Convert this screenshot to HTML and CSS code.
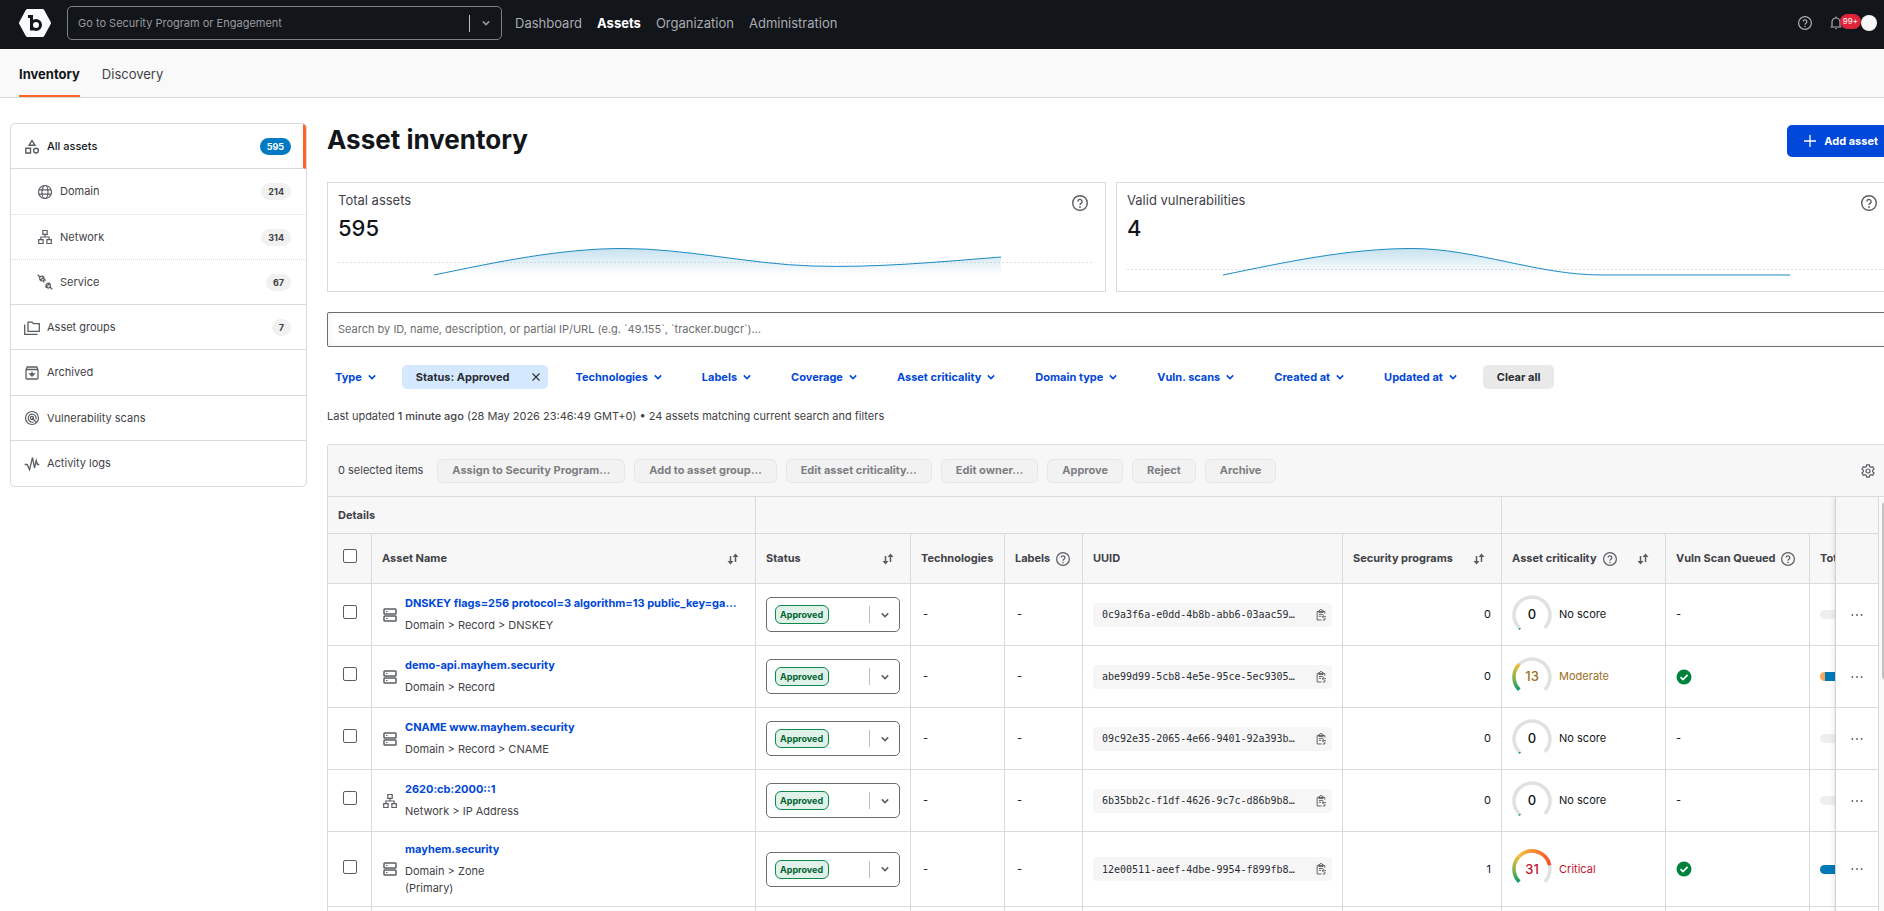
FILE: index.html
```
<!DOCTYPE html>
<html lang="en">
<head>
    <meta charset="UTF-8">
    <meta name="viewport" content="width=device-width, initial-scale=1.0">
    <title>Asset inventory</title>
    <link rel="stylesheet" href="styles.css">
</head>
<body>
    <!-- Shared icons -->
    <svg class="sprite" aria-hidden="true">
        <symbol id="chevron" viewBox="0 0 12 12"><path d="M2.800 4.400 6 7.600l3.200-3.200" fill="none" stroke="currentColor" stroke-width="1.500"/></symbol>
        <symbol id="help" viewBox="0 0 16 16"><circle cx="8" cy="8" r="7.300" fill="none" stroke="currentColor" stroke-width="1.400"/><path d="M5.900 6.400a2.100 2.100 0 1 1 3.400 1.700C8.400 8.700 8 9.100 8 10.100" fill="none" stroke="currentColor" stroke-width="1.400"/><circle cx="8" cy="12" r=".9" fill="currentColor"/></symbol>
        <symbol id="sort" viewBox="0 0 14 14"><path d="M4.500 4v6M9.500 10V4" stroke="currentColor" stroke-width="1.500"/><path d="M1.500 9h6l-3 3.500zM6.500 5h6l-3-3.500z" fill="currentColor"/></symbol>
        <symbol id="network" viewBox="0 0 16 16"><path d="M5.800 1.500h4.400v3.800H5.800zM1.700 10.700h4.400v3.800H1.700zM9.900 10.700h4.400v3.800H9.900zM8 5.300V8M3.900 10.700V8h8.200v2.700" fill="none" stroke="currentColor" stroke-width="1.200"/></symbol>
        <symbol id="record" viewBox="0 0 16 16"><rect x="2" y="2" width="12" height="5" rx=".8" fill="none" stroke="currentColor" stroke-width="1.500"/><rect x="2" y="9" width="12" height="5" rx=".8" fill="none" stroke="currentColor" stroke-width="1.500"/><path d="M4 4.500h1.500M4 11.500h1.500" stroke="currentColor" stroke-width="1.200"/></symbol>
        <symbol id="copy" viewBox="0 0 14 14"><path d="M11.500 5.500V3h-9v9.800h5M4.500 3V1.800h1.200a1.300 1.300 0 0 1 2.600 0h1.200V4h-5zM4.500 6.300h5M4.500 8.500H7M11.500 12.800H9M12.800 9H8.500M10.200 7.200 8.400 9l1.800 1.800M11.500 10.500v2.300" fill="none" stroke="currentColor" stroke-width="1.100"/></symbol>
        <symbol id="check" viewBox="0 0 16 16"><circle cx="8" cy="8" r="7.500" fill="#00823c"/><path d="m4.500 8.200 2.500 2.400 4.600-4.700" fill="none" stroke="#fff" stroke-width="1.600"/></symbol>
        <symbol id="dots" viewBox="0 0 12 12"><circle cx="1.400" cy="6" r=".9"/><circle cx="6" cy="6" r=".9"/><circle cx="10.600" cy="6" r=".9"/></symbol>
        <symbol id="gauge-0" viewBox="0 0 40 40"><path d="M7.270 32.730A18 18 0 1 1 32.730 32.730" class="gauge-track"/><path d="M8.500 33.200 6.800 34.300" stroke="#0a9b6a" stroke-width="1.500"/></symbol>
        <symbol id="gauge-13" viewBox="0 0 40 40"><path d="M7.270 32.730A18 18 0 1 1 32.730 32.730" class="gauge-track"/><path d="M7.270 32.730A18 18 0 0 1 7.270 7.270" fill="none" stroke="url(#green-yellow)" stroke-width="3.500"/></symbol>
        <symbol id="gauge-31" viewBox="0 0 40 40"><path d="M7.270 32.730A18 18 0 1 1 32.730 32.730" class="gauge-track"/><path d="M7.270 32.730A18 18 0 0 1 7.270 7.270" fill="none" stroke="url(#green-yellow)" stroke-width="3.500"/><path d="M7.270 7.270A18 18 0 0 1 37.600 16.260" fill="none" stroke="url(#yellow-red)" stroke-width="3.500"/></symbol>
        <defs>
            <linearGradient id="green-yellow" gradientUnits="userSpaceOnUse" x1="0" y1="33" x2="0" y2="7"><stop offset="0" stop-color="#0a9b6a"/><stop offset=".4" stop-color="#7ab04c"/><stop offset="1" stop-color="#f7bf35"/></linearGradient>
            <linearGradient id="yellow-red" gradientUnits="userSpaceOnUse" x1="7" y1="0" x2="38" y2="0"><stop offset="0" stop-color="#f7bf35"/><stop offset="1" stop-color="#fb4f2a"/></linearGradient>
            <linearGradient id="area" x1="0" y1="0" x2="0" y2="1"><stop offset="0" stop-color="#007ab8" stop-opacity=".22"/><stop offset="1" stop-color="#007ab8" stop-opacity="0"/></linearGradient>
        </defs>
    </svg>

    <header class="topbar">
        <a href="#" class="logo" aria-label="Home">
            <svg width="32" height="28" viewBox="0 0 32 28"><path d="M8.500 0h15a2 2 0 0 1 1.700 1l6.500 12a2 2 0 0 1 0 2l-6.500 12a2 2 0 0 1-1.700 1h-15a2 2 0 0 1-1.700-1L.3 15a2 2 0 0 1 0-2L6.800 1a2 2 0 0 1 1.700-1z" fill="#f7faff"/><path d="M9 7.500h3.500v14" fill="none" stroke="#12151a" stroke-width="3"/><circle cx="17" cy="16" r="4.500" fill="none" stroke="#12151a" stroke-width="3"/></svg>
        </a>
        <div class="program-picker">
            <select aria-label="Program"><option>Go to Security Program or Engagement</option></select>
            <span class="divider"></span>
            <svg class="icon-12"><use href="#chevron"/></svg>
        </div>
        <nav class="main-nav">
            <a href="#">Dashboard</a>
            <a href="#" class="active">Assets</a>
            <a href="#">Organization</a>
            <a href="#">Administration</a>
        </nav>
        <div class="account">
            <button class="icon-button" aria-label="Help"><svg class="icon-14"><use href="#help"/></svg></button>
            <button class="icon-button bell" aria-label="Notifications">
                <svg width="12" height="14" viewBox="0 0 12 14"><path d="M.5 11h11M2 11V6a4 4 0 0 1 8 0v5M6 2V.4" fill="none" stroke="currentColor" stroke-width="1.200"/><path d="M4.700 12.200h2.600L6 13.600z" fill="currentColor"/></svg>
                <span class="bell-count">99+</span>
            </button>
            <button class="avatar" aria-label="Account"></button>
        </div>
    </header>

    <nav class="subnav">
        <a href="#" class="active">Inventory</a>
        <a href="#">Discovery</a>
    </nav>

    <div class="page">
        <aside class="sidebar">
            <a href="#" class="item current">
                <svg class="icon-16" viewBox="0 0 16 16"><path d="M8 1.500 11 6.300H5zM1.800 9.300h4.700v4.700H1.800z" fill="none" stroke="currentColor" stroke-width="1.400"/><circle cx="12" cy="11.600" r="2.400" fill="none" stroke="currentColor" stroke-width="1.400"/></svg>
                <span>All assets</span><span class="count">595</span>
            </a>
            <a href="#" class="item sub">
                <svg class="icon-16" viewBox="0 0 16 16"><g fill="none" stroke="currentColor" stroke-width="1.200"><circle cx="8" cy="8" r="6.500"/><ellipse cx="8" cy="8" rx="3" ry="6.500"/><path d="M1.900 5.800h12.200M1.900 10.200h12.200"/></g></svg>
                <span>Domain</span><span class="count">214</span>
            </a>
            <a href="#" class="item sub">
                <svg class="icon-16"><use href="#network"/></svg>
                <span>Network</span><span class="count">314</span>
            </a>
            <a href="#" class="item sub last">
                <svg class="icon-16" viewBox="0 0 16 16"><g fill="none" stroke="currentColor" stroke-width="1.300"><path d="M.7.7l2.500 2.500M2.900 6.800 7.100 2.600M3.400 6.100c-1.400-1.400-.8-3.300.4-3.700 1-.5 2-.3 2.600.7M3.700 6.600l2.500.3.9-.9-.3-2.700M5.800 6.800l1.600 1.600M6.900 4.800l1.800 1.600M12.800 12.800l2.500 2.500M8.600 13.600l4.500-4.500M12.500 9.700c1.400 1.400 1.100 3-.2 3.900-1 .6-2 .4-2.800-.7M8.800 13l.5-2.500 1.200-1.200 2.500-.2"/></g></svg>
                <span>Service</span><span class="count">67</span>
            </a>
            <a href="#" class="item">
                <svg class="icon-16" viewBox="0 0 16 16"><path d="M4 2.200h4L9.500 3.700h5.800v7.600H4zM.7 4.500v9.800h12.800" fill="none" stroke="currentColor" stroke-width="1.300"/></svg>
                <span>Asset groups</span><span class="count">7</span>
            </a>
            <a href="#" class="item">
                <svg class="icon-16" viewBox="0 0 16 16"><path d="M2 4.800V13a1 1 0 0 0 1 1h10a1 1 0 0 0 1-1V4.800L12.800 2H3.200zM2 4.500h12M8 6.500v4M5.800 8.800 8 11l2.200-2.200z" fill="none" stroke="currentColor" stroke-width="1.300"/></svg>
                <span>Archived</span>
            </a>
            <a href="#" class="item">
                <svg class="icon-16" viewBox="0 0 16 16"><g fill="none" stroke="currentColor" stroke-width="1.200"><circle cx="8" cy="8" r="6.500"/><path d="M12 9.500A4 4 0 1 0 9.500 12"/><circle cx="8" cy="8" r="1.600"/><path d="m8 8 4.500 4.500"/></g></svg>
                <span>Vulnerability scans</span>
            </a>
            <a href="#" class="item">
                <svg class="icon-16" viewBox="0 0 16 16"><path d="M.7 8.500h2.500l2.300 5.300L8.500 1.500 10.500 12l1.700-7.500 1.300 4h1.800" fill="none" stroke="currentColor" stroke-width="1.300"/></svg>
                <span>Activity logs</span>
            </a>
        </aside>

        <main class="content">
            <div class="title-row">
                <h1>Asset inventory</h1>
                <button class="primary">
                    <svg class="icon-12" viewBox="0 0 12 12"><path d="M6 0v12M0 6h12" stroke="currentColor" stroke-width="1.300"/></svg>
                    Add asset
                </button>
            </div>

            <section class="stats">
                <div class="stat">
                    <div class="stat-head">
                        <div>
                            <h2>Total assets</h2>
                            <p class="stat-value">595</p>
                        </div>
                        <svg class="icon-16"><use href="#help"/></svg>
                    </div>
                    <svg class="chart" viewBox="0 4 757 32" preserveAspectRatio="none">
                        <path class="mid" d="M0 18.500H757"/>
                        <path fill="url(#area)" d="M96 31C159 18 222 4.500 285 4.500 348 4.500 411 20 474 22S600 18 663 13V31z"/>
                        <path class="line" d="M96 31C159 18 222 4.500 285 4.500 348 4.500 411 20 474 22S600 18 663 13"/>
                    </svg>
                </div>
                <div class="stat">
                    <div class="stat-head">
                        <div>
                            <h2>Valid vulnerabilities</h2>
                            <p class="stat-value">4</p>
                        </div>
                        <svg class="icon-16"><use href="#help"/></svg>
                    </div>
                    <svg class="chart" viewBox="0 4 757 32" preserveAspectRatio="none">
                        <path class="mid" d="M0 25.500H757"/>
                        <path fill="url(#area)" d="M96 31C159 18 222 4.500 285 4.500S411 31 474 31z"/>
                        <path class="line" d="M96 31C159 18 222 4.500 285 4.500S411 31 474 31H663"/>
                    </svg>
                </div>
            </section>

            <input class="search" type="text" aria-label="Search assets" placeholder="Search by ID, name, description, or partial IP/URL (e.g. `49.155`, `tracker.bugcr`)…">

            <div class="filters">
                <button class="filter">Type <svg class="icon-12"><use href="#chevron"/></svg></button>
                <button class="chip">Status: Approved <svg class="icon-12" viewBox="0 0 12 12"><path d="m2.500 2.500 7 7M9.500 2.500l-7 7" stroke="currentColor" stroke-width="1.100"/></svg></button>
                <button class="filter">Technologies <svg class="icon-12"><use href="#chevron"/></svg></button>
                <button class="filter">Labels <svg class="icon-12"><use href="#chevron"/></svg></button>
                <button class="filter">Coverage <svg class="icon-12"><use href="#chevron"/></svg></button>
                <button class="filter">Asset criticality <svg class="icon-12"><use href="#chevron"/></svg></button>
                <button class="filter">Domain type <svg class="icon-12"><use href="#chevron"/></svg></button>
                <button class="filter">Vuln. scans <svg class="icon-12"><use href="#chevron"/></svg></button>
                <button class="filter">Created at <svg class="icon-12"><use href="#chevron"/></svg></button>
                <button class="filter">Updated at <svg class="icon-12"><use href="#chevron"/></svg></button>
                <button class="clear">Clear all</button>
            </div>

            <p class="updated">Last updated <span>1 minute ago</span> (28 May 2026 23:46:49 GMT+0) • 24 assets matching current search and filters</p>

            <section class="panel">
                <div class="toolbar">
                    <span class="selected">0 selected items</span>
                    <button disabled>Assign to Security Program…</button>
                    <button disabled>Add to asset group…</button>
                    <button disabled>Edit asset criticality…</button>
                    <button disabled>Edit owner…</button>
                    <button disabled>Approve</button>
                    <button disabled>Reject</button>
                    <button disabled>Archive</button>
                    <button class="icon-button settings" aria-label="Table settings">
                        <svg class="icon-14" viewBox="0 0 14 14"><path d="M5.700.8h2.600l.4 1.700 1.300.8 1.700-.6 1.300 2.300-1.300 1.200v1.600l1.300 1.200-1.300 2.300-1.700-.6-1.300.8-.4 1.700H5.700l-.4-1.700-1.300-.8-1.700.6L1 9l1.300-1.200V6.200L1 5l1.300-2.300 1.700.6 1.300-.8z" fill="none" stroke="currentColor" stroke-width="1.200"/><circle cx="7" cy="7" r="2" fill="none" stroke="currentColor" stroke-width="1.200"/></svg>
                    </button>
                </div>
                <div class="table-area">
                    <div class="table-scroll">
                        <table>
                            <colgroup>
                                <col class="w-check"><col class="w-name"><col class="w-status"><col class="w-tech"><col class="w-labels"><col class="w-uuid"><col class="w-programs"><col class="w-criticality"><col class="w-scan"><col class="w-total"><col class="w-actions">
                            </colgroup>
                            <thead>
                                <tr class="groups">
                                    <th colspan="2">Details</th>
                                    <th colspan="5"></th>
                                    <th colspan="3"></th>
                                    <th class="actions"></th>
                                </tr>
                                <tr class="columns">
                                    <th class="check"><input type="checkbox" aria-label="Select all"></th>
                                    <th><div class="head">Asset Name <svg class="icon-14 sort"><use href="#sort"/></svg></div></th>
                                    <th><div class="head">Status <svg class="icon-14 sort"><use href="#sort"/></svg></div></th>
                                    <th>Technologies</th>
                                    <th><div class="head">Labels <svg class="icon-14"><use href="#help"/></svg></div></th>
                                    <th>UUID</th>
                                    <th><div class="head">Security programs <svg class="icon-14 sort"><use href="#sort"/></svg></div></th>
                                    <th><div class="head">Asset criticality <svg class="icon-14"><use href="#help"/></svg> <svg class="icon-14 sort"><use href="#sort"/></svg></div></th>
                                    <th><div class="head">Vuln Scan Queued <svg class="icon-14"><use href="#help"/></svg></div></th>
                                    <th>Total</th>
                                    <th class="actions"></th>
                                </tr>
                            </thead>
                            <tbody>
                                <tr>
                                    <td class="check"><input type="checkbox" aria-label="Select DNSKEY"></td>
                                    <td><div class="asset"><svg class="icon-16"><use href="#record"/></svg><div><a href="#">DNSKEY flags=256 protocol=3 algorithm=13 public_key=ga…</a><p>Domain &gt; Record &gt; DNSKEY</p></div></div></td>
                                    <td><div class="status"><select aria-label="Status"><option>Approved</option></select><span class="divider"></span><svg class="icon-12"><use href="#chevron"/></svg></div></td>
                                    <td class="dash">-</td>
                                    <td class="dash">-</td>
                                    <td><div class="uuid"><code>0c9a3f6a-e0dd-4b8b-abb6-03aac59…</code><button class="icon-button" aria-label="Copy"><svg class="icon-12"><use href="#copy"/></svg></button></div></td>
                                    <td class="number">0</td>
                                    <td><div class="score"><div class="gauge"><svg><use href="#gauge-0"/></svg><b>0</b></div>No score</div></td>
                                    <td>-</td>
                                    <td><div class="bar"></div></td>
                                    <td class="actions"><button class="icon-button" aria-label="More"><svg class="icon-12"><use href="#dots"/></svg></button></td>
                                </tr>
                                <tr>
                                    <td class="check"><input type="checkbox" aria-label="Select demo-api.mayhem.security"></td>
                                    <td><div class="asset"><svg class="icon-16"><use href="#record"/></svg><div><a href="#">demo-api.mayhem.security</a><p>Domain &gt; Record</p></div></div></td>
                                    <td><div class="status"><select aria-label="Status"><option>Approved</option></select><span class="divider"></span><svg class="icon-12"><use href="#chevron"/></svg></div></td>
                                    <td class="dash">-</td>
                                    <td class="dash">-</td>
                                    <td><div class="uuid"><code>abe99d99-5cb8-4e5e-95ce-5ec9305…</code><button class="icon-button" aria-label="Copy"><svg class="icon-12"><use href="#copy"/></svg></button></div></td>
                                    <td class="number">0</td>
                                    <td><div class="score moderate"><div class="gauge"><svg><use href="#gauge-13"/></svg><b>13</b></div>Moderate</div></td>
                                    <td><svg class="icon-16"><use href="#check"/></svg></td>
                                    <td><div class="bar mixed"></div></td>
                                    <td class="actions"><button class="icon-button" aria-label="More"><svg class="icon-12"><use href="#dots"/></svg></button></td>
                                </tr>
                                <tr>
                                    <td class="check"><input type="checkbox" aria-label="Select www.mayhem.security"></td>
                                    <td><div class="asset"><svg class="icon-16"><use href="#record"/></svg><div><a href="#">CNAME www.mayhem.security</a><p>Domain &gt; Record &gt; CNAME</p></div></div></td>
                                    <td><div class="status"><select aria-label="Status"><option>Approved</option></select><span class="divider"></span><svg class="icon-12"><use href="#chevron"/></svg></div></td>
                                    <td class="dash">-</td>
                                    <td class="dash">-</td>
                                    <td><div class="uuid"><code>09c92e35-2065-4e66-9401-92a393b…</code><button class="icon-button" aria-label="Copy"><svg class="icon-12"><use href="#copy"/></svg></button></div></td>
                                    <td class="number">0</td>
                                    <td><div class="score"><div class="gauge"><svg><use href="#gauge-0"/></svg><b>0</b></div>No score</div></td>
                                    <td>-</td>
                                    <td><div class="bar"></div></td>
                                    <td class="actions"><button class="icon-button" aria-label="More"><svg class="icon-12"><use href="#dots"/></svg></button></td>
                                </tr>
                                <tr>
                                    <td class="check"><input type="checkbox" aria-label="Select 2620:cb:2000::1"></td>
                                    <td><div class="asset"><svg class="icon-16"><use href="#network"/></svg><div><a href="#">2620:cb:2000::1</a><p>Network &gt; IP Address</p></div></div></td>
                                    <td><div class="status"><select aria-label="Status"><option>Approved</option></select><span class="divider"></span><svg class="icon-12"><use href="#chevron"/></svg></div></td>
                                    <td class="dash">-</td>
                                    <td class="dash">-</td>
                                    <td><div class="uuid"><code>6b35bb2c-f1df-4626-9c7c-d86b9b8…</code><button class="icon-button" aria-label="Copy"><svg class="icon-12"><use href="#copy"/></svg></button></div></td>
                                    <td class="number">0</td>
                                    <td><div class="score"><div class="gauge"><svg><use href="#gauge-0"/></svg><b>0</b></div>No score</div></td>
                                    <td>-</td>
                                    <td><div class="bar"></div></td>
                                    <td class="actions"><button class="icon-button" aria-label="More"><svg class="icon-12"><use href="#dots"/></svg></button></td>
                                </tr>
                                <tr>
                                    <td class="check"><input type="checkbox" aria-label="Select mayhem.security"></td>
                                    <td><div class="asset"><svg class="icon-16"><use href="#record"/></svg><div><a href="#">mayhem.security</a><p>Domain &gt; Zone<br>(Primary)</p></div></div></td>
                                    <td><div class="status"><select aria-label="Status"><option>Approved</option></select><span class="divider"></span><svg class="icon-12"><use href="#chevron"/></svg></div></td>
                                    <td class="dash">-</td>
                                    <td class="dash">-</td>
                                    <td><div class="uuid"><code>12e00511-aeef-4dbe-9954-f899fb8…</code><button class="icon-button" aria-label="Copy"><svg class="icon-12"><use href="#copy"/></svg></button></div></td>
                                    <td class="number">1</td>
                                    <td><div class="score critical"><div class="gauge"><svg><use href="#gauge-31"/></svg><b>31</b></div>Critical</div></td>
                                    <td><svg class="icon-16"><use href="#check"/></svg></td>
                                    <td><div class="bar full"></div></td>
                                    <td class="actions"><button class="icon-button" aria-label="More"><svg class="icon-12"><use href="#dots"/></svg></button></td>
                                </tr>
                                <tr>
                                    <td></td><td></td><td></td><td></td><td></td><td></td><td></td><td></td><td></td><td></td><td class="actions"></td>
                                </tr>
                            </tbody>
                        </table>
                    </div>
                    <div class="scroll-track"><div class="scroll-thumb"></div></div>
                </div>
            </section>
        </main>
    </div>
</body>
</html>
```

FILE: styles.css
```
* {
    box-sizing: border-box;
}
body {
    margin: 0;
    height: 100vh;
    overflow: hidden;
    display: flex;
    flex-direction: column;
    background: #fff;
    color: #3f4247;
    font-family: Inter, "Liberation Sans", sans-serif;
    font-size: 11px;
    line-height: 17px;
}
h1, h2, p {
    margin: 0;
}
a {
    color: inherit;
    text-decoration: none;
}
button, input, select {
    font: inherit;
    color: inherit;
}
button {
    border: none;
    cursor: pointer;
}
select {
    appearance: none;
    background: none;
    border: none;
    padding: 0;
}
svg {
    display: block;
    flex: none;
}
.sprite {
    position: absolute;
    width: 0;
    height: 0;
}
.icon-12 {
    width: 12px;
    height: 12px;
}
.icon-14 {
    width: 14px;
    height: 14px;
}
.icon-16 {
    width: 16px;
    height: 16px;
}
.icon-button {
    display: flex;
    align-items: center;
    padding: 0;
    background: none;
}
.divider {
    width: 1px;
    height: 17px;
    background: #bbbdc0;
}

/* Top bar */
.topbar {
    flex: none;
    display: flex;
    align-items: center;
    height: 49px;
    padding: 0 7px 3px 19px;
    background: #12151a;
    color: #a9acb0;
}
.program-picker {
    display: flex;
    align-items: center;
    gap: 10px;
    width: 435px;
    height: 34px;
    margin: 0 13px 0 16px;
    padding: 0 9px 0 10px;
    border: 1px solid #7d8084;
    border-radius: 5px;
    color: #96999d;
}
.program-picker select {
    flex: 1;
}
.main-nav {
    display: flex;
    gap: 15px;
    font-size: 13px;
}
.main-nav .active {
    color: #fff;
    font-weight: 700;
}
.account {
    display: flex;
    align-items: center;
    margin-left: auto;
}
.bell {
    margin-left: 18px;
}
.bell-count {
    margin: 0 0 4px -2px;
    padding: 0 3px;
    border-radius: 8px;
    background: #e0253a;
    color: #fff;
    font-size: 8px;
    line-height: 15px;
}
.avatar {
    width: 16px;
    height: 16px;
    padding: 0;
    border-radius: 50%;
    background: #f7f8f7;
}

/* Section tabs */
.subnav {
    flex: none;
    display: flex;
    gap: 22px;
    height: 49px;
    padding-left: 19px;
    background: #f9f9f9;
    border-bottom: 1px solid #d9dadb;
    font-size: 13px;
    line-height: 51px;
}
.subnav .active {
    color: #12151a;
    font-weight: 700;
    border-bottom: 2px solid #ff6426;
}

.page {
    flex: 1;
    min-height: 0;
    display: flex;
    gap: 20px;
    padding: 25px 0 0 10px;
}

/* Sidebar */
.sidebar {
    flex: 0 0 297px;
    align-self: flex-start;
    display: grid;
    grid-auto-rows: 1fr;
    height: 364px;
    border: 1px solid #d9dadb;
    border-radius: 5px;
    overflow: hidden;
}
.item {
    display: flex;
    align-items: center;
    gap: 7px;
    padding: 1px 15px 0 13px;
    border-bottom: 1px solid #d9dadb;
}
.item:last-child {
    border-bottom: none;
}
.item.sub {
    padding-left: 26px;
    border-bottom-style: dotted;
}
.item.sub.last {
    border-bottom-style: solid;
}
.item.current {
    padding-right: 12px;
    border-right: 3px solid #ff6426;
    color: #12151a;
    font-weight: 500;
}
.item svg {
    color: #5a5d62;
}
.count {
    margin-left: auto;
    padding: 0 7px;
    border-radius: 9px;
    background: #f1f1f1;
    color: #3f4247;
    font-size: 9px;
    font-weight: 700;
}
.current .count {
    background: #007ac2;
    color: #fff;
}

/* Content, runs under the right edge of the window */
.content {
    flex: 1;
    min-width: 0;
    margin-right: -11px;
    display: flex;
    flex-direction: column;
}
.title-row {
    display: flex;
    align-items: flex-start;
    justify-content: space-between;
    margin: 2px 0 25px;
}
h1 {
    color: #12151a;
    font-size: 26px;
    font-weight: 700;
    line-height: 30px;
}
.primary {
    display: flex;
    align-items: center;
    gap: 8px;
    height: 32px;
    padding: 0 17px;
    border-radius: 5px;
    background: #0048d9;
    color: #fff;
    font-weight: 700;
}
.stats {
    display: grid;
    grid-template-columns: 1fr 1fr;
    gap: 10px;
}
.stat {
    height: 110px;
    padding: 9px 10px;
    border: 1px solid #d9dadb;
}
.stat-head {
    display: flex;
    justify-content: space-between;
}
.stat-head svg {
    margin: 3px 7px 0 0;
    color: #5a5d62;
}
.stat h2 {
    font-size: 13px;
    font-weight: 400;
}
.stat-value {
    color: #12151a;
    font-size: 22px;
    font-weight: 500;
    line-height: 39px;
}
.chart {
    width: 100%;
    height: 32px;
}
.mid {
    stroke: #e0e1e3;
    stroke-dasharray: 2 2;
}
.line {
    fill: none;
    stroke: #1c8ac4;
}
.search {
    flex: none;
    height: 35px;
    margin-top: 20px;
    padding: 0 10px 2px;
    border: 1px solid #6b6d70;
    border-radius: 2px;
    box-shadow: inset 0 0 8px rgba(0, 0, 0, 0.06);
}
.search::placeholder {
    color: #6b6d70;
    opacity: 1;
}

/* Filters */
.filters {
    display: flex;
    gap: 13px;
    margin: 18px 0 19px -6px;
}
.filters button {
    display: flex;
    align-items: center;
    gap: 4px;
    height: 24px;
    padding: 0 11px 0 14px;
    border-radius: 5px;
    background: none;
    font-weight: 700;
    white-space: nowrap;
}
.filters .filter {
    color: #0048d9;
}
.filters .chip {
    gap: 21px;
    padding-right: 6px;
    background: #d4e9ff;
    color: #2a2d33;
}
.filters .clear {
    padding: 0 14px;
    background: #e9e9e9;
    color: #2a2d33;
}
.updated span {
    font-weight: 500;
}

/* Table panel */
.panel {
    flex: 1;
    min-height: 0;
    display: flex;
    flex-direction: column;
    margin-top: 19px;
    border: 1px solid #d9dadb;
    border-bottom: none;
    border-radius: 3px 3px 0 0;
}
.toolbar {
    flex: none;
    display: flex;
    align-items: center;
    gap: 9px;
    height: 52px;
    padding: 0 19px 0 10px;
    background: #f7f7f7;
    border-bottom: 1px solid #d9dadb;
}
.selected {
    margin-right: 5px;
}
.toolbar button:disabled {
    height: 24px;
    padding: 0 14px;
    border: 1px solid #e6e6e6;
    border-radius: 6px;
    background: #f2f2f2;
    color: #7d7f82;
    font-weight: 700;
}
.toolbar .settings {
    margin-left: auto;
    color: #5a5d62;
}
.table-area {
    flex: 1;
    min-height: 0;
    display: flex;
}
.table-scroll {
    flex: 1;
    min-width: 0;
    overflow: hidden;
}
.scroll-track {
    width: 15px;
    padding: 5px 3px;
    background: #fafafa;
}
.scroll-thumb {
    height: 178px;
    border-radius: 4px;
    background: #c1c1c1;
}
table {
    width: 1780px;
    table-layout: fixed;
    border-collapse: separate;
    border-spacing: 0;
}
.w-check { width: 44px; }
.w-name { width: 384px; }
.w-status { width: 155px; }
.w-tech { width: 94px; }
.w-labels { width: 78px; }
.w-uuid { width: 260px; }
.w-programs { width: 159px; }
.w-criticality { width: 164px; }
.w-scan { width: 144px; }
.w-total { width: 254px; }
.w-actions { width: 44px; }
th, td {
    padding: 9px 10px;
    border-right: 1px solid #d9dadb;
    border-bottom: 1px solid #d9dadb;
    background: #fff;
    text-align: left;
}
th {
    padding: 0 10px;
    background: #f7f7f7;
    font-weight: 700;
    white-space: nowrap;
}
td {
    height: 62px;
    color: #12151a;
}
.groups th {
    height: 37px;
}
.columns th {
    height: 50px;
}
.head {
    display: flex;
    align-items: center;
    gap: 6px;
}
.head svg {
    color: #5a5d62;
}
.head .sort {
    margin: 0 5px 0 auto;
}
.check {
    padding: 0 0 6px;
    text-align: center;
}
input[type="checkbox"] {
    appearance: none;
    width: 14px;
    height: 14px;
    margin: 0;
    border: 1px solid #5a5d62;
    border-radius: 2px;
    background: #fff;
    vertical-align: middle;
}
.asset {
    display: flex;
    align-items: center;
    gap: 7px;
    color: #3f4247;
}
.asset svg {
    color: #5a5d62;
}
.asset div {
    min-width: 0;
}
.asset a {
    display: block;
    margin-bottom: 5px;
    color: #0048d9;
    font-weight: 700;
    overflow: hidden;
    text-overflow: ellipsis;
    white-space: nowrap;
}
.status {
    display: flex;
    align-items: center;
    gap: 9px;
    height: 35px;
    padding: 0 8px;
    border: 1px solid #6b6d70;
    border-radius: 5px;
    color: #5a5d62;
}
.status select {
    height: 19px;
    margin-right: auto;
    padding: 0 4px;
    border: 1px solid #0b8a4a;
    border-radius: 6px;
    background: #e0f1e9;
    color: #00642f;
    font-size: 9px;
    font-weight: 700;
}
.dash {
    padding-left: 12px;
}
.uuid {
    display: flex;
    align-items: center;
    justify-content: space-between;
    height: 24px;
    padding: 0 5px 0 9px;
    border-radius: 4px;
    background: #f6f6f6;
    color: #5a5d62;
}
.uuid code {
    color: #2a2d33;
    font-family: "DejaVu Sans Mono", monospace;
    font-size: 10px;
}
.number {
    text-align: right;
}
.score {
    display: flex;
    align-items: center;
    gap: 7px;
}
.gauge {
    display: grid;
    place-items: center;
    width: 40px;
    height: 40px;
}
.gauge svg,
.gauge b {
    grid-area: 1 / 1;
}
.gauge svg {
    width: 40px;
    height: 40px;
}
.gauge b {
    font-size: 13px;
    font-weight: 500;
}
.gauge-track {
    fill: none;
    stroke: #e0e1e2;
    stroke-width: 3.5;
}
.moderate {
    color: #9c6d1e;
}
.critical {
    color: #c4122f;
}
.bar {
    height: 9px;
    border-radius: 5px;
    background: #eee;
}
.bar.mixed {
    background: linear-gradient(90deg, #fba65a 5px, #0079b8 5px);
}
.bar.full {
    background: #0079b8;
}
.actions {
    position: sticky;
    right: 0;
    padding: 0;
    border-left: 1px solid #d0d1d3;
    box-shadow: -1px 0 4px rgba(40, 45, 60, 0.12);
    clip-path: inset(0 0 0 -8px);
}
.actions button {
    margin: 0 auto;
    fill: #5a5d62;
}
```
